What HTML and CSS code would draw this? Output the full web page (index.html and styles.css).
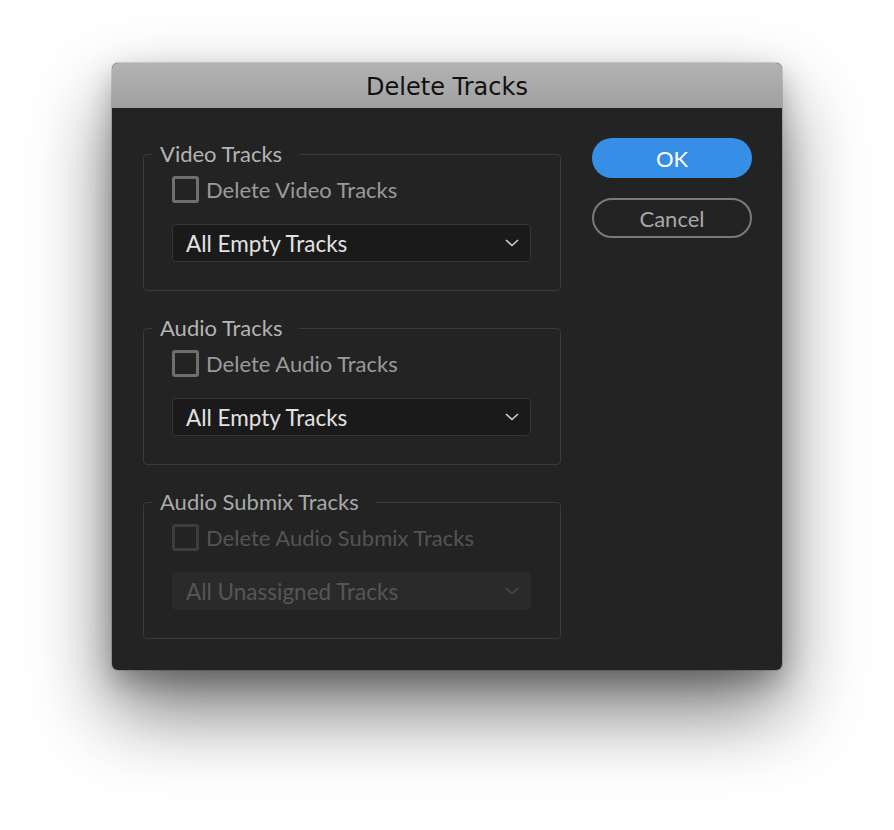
FILE: index.html
```html
<!DOCTYPE html>
<html>
<head>
<meta charset="utf-8">
<link rel="stylesheet" href="styles.css">
</head>
<body>
<div class="dialog">
  <div class="titlebar">Delete Tracks</div>
  <div class="content">
    <div class="groups">
      <fieldset class="group">
        <legend>Video Tracks</legend>
        <label class="check"><span class="box"></span><span>Delete Video Tracks</span></label>
        <div class="select"><span>All Empty Tracks</span><svg class="chev" width="14" height="8" viewBox="0 0 14 8"><path d="M1 1 L7 6.5 L13 1" fill="none" stroke="currentColor" stroke-width="1.6"/></svg></div>
      </fieldset>
      <fieldset class="group">
        <legend>Audio Tracks</legend>
        <label class="check"><span class="box"></span><span>Delete Audio Tracks</span></label>
        <div class="select"><span>All Empty Tracks</span><svg class="chev" width="14" height="8" viewBox="0 0 14 8"><path d="M1 1 L7 6.5 L13 1" fill="none" stroke="currentColor" stroke-width="1.6"/></svg></div>
      </fieldset>
      <fieldset class="group disabled">
        <legend>Audio Submix Tracks</legend>
        <label class="check"><span class="box"></span><span>Delete Audio Submix Tracks</span></label>
        <div class="select"><span>All Unassigned Tracks</span><svg class="chev" width="14" height="8" viewBox="0 0 14 8"><path d="M1 1 L7 6.5 L13 1" fill="none" stroke="currentColor" stroke-width="1.6"/></svg></div>
      </fieldset>
    </div>
    <div class="buttons">
      <button class="btn ok">OK</button>
      <button class="btn cancel">Cancel</button>
    </div>
  </div>
</div>
</body>
</html>
```
FILE: styles.css
```css
html, body {
  margin: 0;
  padding: 0;
  background: #ffffff;
}
body {
  width: 894px;
  height: 830px;
  overflow: hidden;
  font-family: Lato, "Open Sans", sans-serif;
}
.dialog {
  margin: 63px 0 0 112px;
  width: 670px;
  height: 607px;
  border-radius: 6px;
  overflow: hidden;
  background: #232323;
  box-shadow: 0 0 0 1px rgba(0,0,0,0.14), 0 40px 80px rgba(0,0,0,0.55), 0 12px 28px rgba(0,0,0,0.25);
  display: flex;
  flex-direction: column;
}
.titlebar {
  height: 45px;
  background: linear-gradient(#b4b3b4, #a1a0a1);
  font-family: "DejaVu Sans", sans-serif;
  font-size: 24px;
  line-height: 48px;
  text-align: center;
  color: #111;
}
.content {
  display: flex;
  padding: 30px 30px 0 31px;
  gap: 31px;
}
.groups {
  display: flex;
  flex-direction: column;
  gap: 24px;
  width: 418px;
  padding-top: 3px;
}
.group {
  margin: 0;
  border: 1px solid #3a3a3a;
  border-radius: 4px;
  padding: 9px 29px 28px 28px;
  display: flex;
  flex-direction: column;
  gap: 21px;
}
.group legend {
  margin-left: -20px;
  padding: 0 17px 0 8px;
  font-size: 22px;
  line-height: 26px;
  color: #b4b4b4;
}
.check {
  display: flex;
  align-items: center;
  gap: 7px;
  font-size: 22px;
  color: #9a9a9a;
  height: 27px;
}
.box {
  width: 21px;
  height: 21px;
  border: 3px solid #6f6f6f;
  border-radius: 3px;
}
.select {
  height: 36px;
  border: 1px solid #353535;
  border-radius: 4px;
  background: #1a1a1a;
  display: flex;
  align-items: center;
  justify-content: space-between;
  padding: 0 11px 0 13px;
  font-size: 22.5px;
  color: #e2e2e2;
}
.chev {
  color: #cfcfcf;
}
.disabled legend {
  color: #a9a9a9;
}
.disabled .check {
  color: #545454;
}
.disabled .box {
  border-color: #3d3d3d;
}
.disabled .select {
  background: #2a2a2a;
  border-color: #2a2a2a;
  color: #565656;
}
.disabled .chev {
  color: #4a4a4a;
}
.buttons {
  display: flex;
  flex-direction: column;
  gap: 20px;
}
.btn {
  width: 160px;
  height: 40px;
  border-radius: 20px;
  font-family: Lato, "Open Sans", sans-serif;
  font-size: 22px;
  padding: 0;
}
.ok {
  background: #368ee6;
  border: none;
  color: #ffffff;
}
.cancel {
  background: transparent;
  border: 2px solid #7a7a7a;
  color: #a8a8a8;
}
```
